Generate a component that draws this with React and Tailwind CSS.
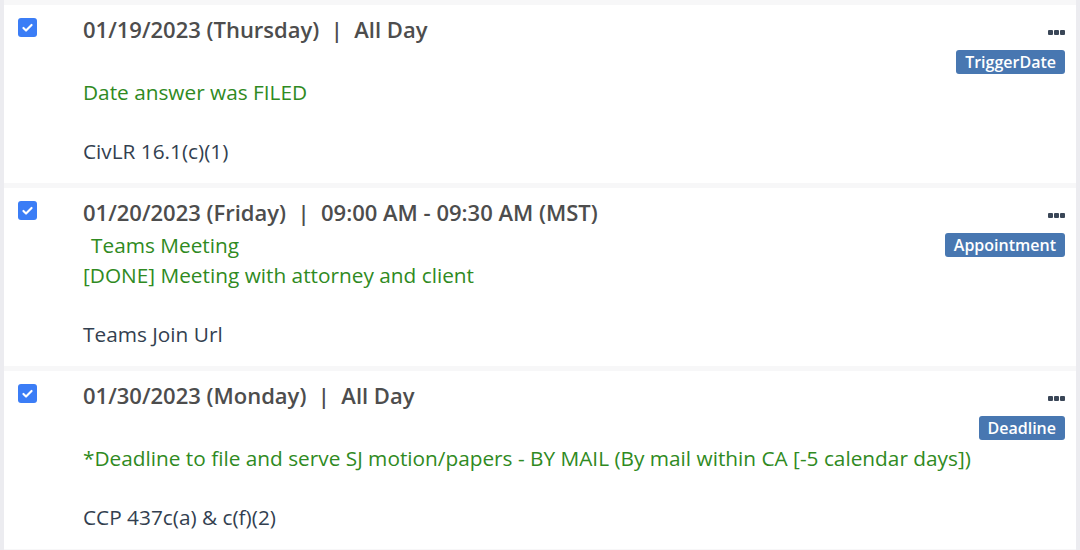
import React from "react";

const events = [
  {
    date: "01/19/2023 (Thursday)",
    time: "All Day",
    location: "",
    title: "Date answer was FILED",
    desc: "CivLR 16.1(c)(1)",
    badge: "TriggerDate",
  },
  {
    date: "01/20/2023 (Friday)",
    time: "09:00 AM - 09:30 AM (MST)",
    location: "Teams Meeting",
    title: "[DONE] Meeting with attorney and client",
    desc: "Teams Join Url",
    badge: "Appointment",
  },
  {
    date: "01/30/2023 (Monday)",
    time: "All Day",
    location: "",
    title: "*Deadline to file and serve SJ motion/papers - BY MAIL (By mail within CA [-5 calendar days])",
    desc: "CCP 437c(a) & c(f)(2)",
    badge: "Deadline",
  },
];

const Checkbox = () => (
  <div className="flex h-[19px] w-[19px] items-center justify-center rounded-[3px] bg-[#3b7df6]">
    <svg viewBox="0 0 16 16" className="h-[13px] w-[13px]">
      <path
        d="M3 8.5l3.2 3.2L13 4.8"
        fill="none"
        stroke="white"
        strokeWidth="2.6"
        strokeLinecap="round"
        strokeLinejoin="round"
      />
    </svg>
  </div>
);

const Dots = () => (
  <div className="flex gap-[1px]">
    <span className="h-[5px] w-[5px] rounded-[1px] bg-[#3a4657]" />
    <span className="h-[5px] w-[5px] rounded-[1px] bg-[#3a4657]" />
    <span className="h-[5px] w-[5px] rounded-[1px] bg-[#3a4657]" />
  </div>
);

const EventRow = ({ ev }) => (
  <div className="flex bg-white pb-[19px] pt-[10px]">
    <div className="pl-[14px] pt-[3px]">
      <Checkbox />
    </div>
    <div className="flex-1 pl-[46px]">
      <div className="text-[22px] font-semibold leading-[28px] text-[#4d4d4d]">
        {ev.date}&nbsp;&nbsp;|&nbsp;&nbsp;{ev.time}
      </div>
      <div className="mt-[6px] h-[26px] pl-[8px] text-[20.8px] leading-[26px] text-[#2f8a22]">
        {ev.location}
      </div>
      <div className="mt-[4px] text-[20.8px] leading-[26px] text-[#2f8a22]">{ev.title}</div>
      <div className="mt-[33px] text-[20.8px] leading-[26px] text-[#333f50]">{ev.desc}</div>
    </div>
    <div className="flex flex-col items-end pr-[11px]">
      <div className="mt-[15px]">
        <Dots />
      </div>
      <div className="mt-[15px] rounded-[3px] bg-[#4877b1] px-[9px] text-[16px] font-semibold leading-[24px] text-white">
        {ev.badge}
      </div>
    </div>
  </div>
);

export default function App() {
  return (
    <div
      className="flex h-[550px] w-[1080px] flex-col gap-[5px] overflow-hidden border-l-[4px] border-r-[4px] border-l-[#ececf0] border-r-[#ececf0] bg-[#f7f7f8] pt-[5px]"
      style={{ fontFamily: '"Open Sans", sans-serif' }}
    >
      {events.map((ev) => (
        <EventRow key={ev.date} ev={ev} />
      ))}
    </div>
  );
}
